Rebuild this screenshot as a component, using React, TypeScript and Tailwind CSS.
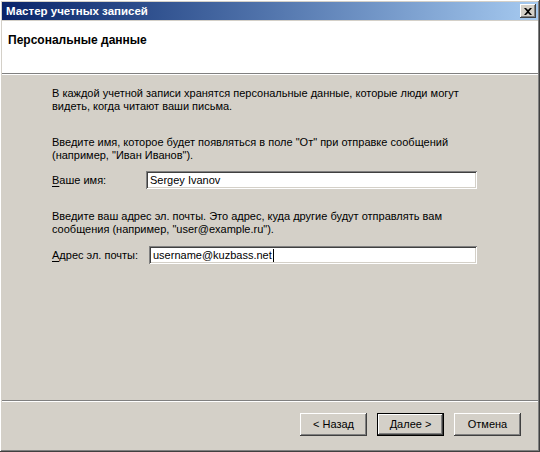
const raised =
  'shadow-[inset_-1px_-1px_#404040,inset_1px_1px_#ffffff,inset_-2px_-2px_#808080,inset_2px_2px_#d4d0c8]';
const sunken =
  'shadow-[inset_1px_1px_#808080,inset_-1px_-1px_#ffffff,inset_2px_2px_#404040,inset_-2px_-2px_#d4d0c8]';

function Field({ label, accel, width, value, caret }: { label: string; accel: string; width: string; value: string; caret?: boolean }) {
  return (
    <div className="flex items-center">
      <label className={`${width} shrink-0`}>
        <span className="underline underline-offset-2">{accel}</span>
        {label}
      </label>
      <div className={`flex h-[18px] flex-1 items-center bg-white pl-[4px] ${sunken}`}>
        <span>{value}</span>
        {caret && <span className="ml-[1px] h-[13px] w-[1px] bg-black" />}
      </div>
    </div>
  );
}

function Button({ children, primary }: { children: React.ReactNode; primary?: boolean }) {
  return (
    <button
      className={`flex h-[23px] w-[67px] items-center justify-center bg-[#d4d0c8] text-black ${
        primary
          ? 'shadow-[inset_0_0_0_1px_#000000,inset_-2px_-2px_#404040,inset_2px_2px_#ffffff,inset_-3px_-3px_#808080]'
          : raised
      }`}
    >
      {children}
    </button>
  );
}

export default function App() {
  return (
    <div
      className={`flex h-[452px] w-[540px] flex-col bg-[#d4d0c8] p-[2px] text-[11px] leading-[13px] text-black ${raised}`}
      style={{ fontFamily: '"Liberation Sans", Arial, sans-serif' }}
    >
      {/* title bar */}
      <div className="flex h-[18px] shrink-0 items-center justify-between bg-gradient-to-r from-[#0a246a] to-[#a6caf0] pl-[4px] pr-[2px]">
        <span className="text-[11.5px] font-bold text-white">Мастер учетных записей</span>
        <div className={`flex h-[14px] w-[16px] items-center justify-center bg-[#d4d0c8] ${raised}`}>
          <svg width="8" height="7" viewBox="0 0 8 7">
            <path d="M0 0h2l2 2 2-2h2L5 3.5 8 7H6L4 5 2 7H0l3-3.5z" fill="#000" />
          </svg>
        </div>
      </div>

      {/* header */}
      <div className="mt-[1px] flex h-[52px] shrink-0 items-start bg-white pl-[6px] pt-[13px]">
        <span className="text-[12px] font-bold">Персональные данные</span>
      </div>
      <div className="h-[1px] shrink-0 bg-[#808080]" />
      <div className="h-[1px] shrink-0 bg-white" />

      {/* body */}
      <div className="flex flex-1 flex-col pl-[50px] pr-[61px] pt-[12px]">
        <p>
          В каждой учетной записи хранятся персональные данные, которые люди могут
          <br />
          видеть, когда читают ваши письма.
        </p>
        <p className="mt-[23px]">
          Введите имя, которое будет появляться в поле "От" при отправке сообщений
          <br />
          (например, "Иван Иванов").
        </p>
        <div className="mt-[9px]">
          <Field label="аше имя:" accel="В" width="w-[94px]" value="Sergey Ivanov" />
        </div>
        <p className="mt-[21px]">
          Введите ваш адрес эл. почты. Это адрес, куда другие будут отправлять вам
          <br />
          сообщения (например, "user@example.ru").
        </p>
        <div className="mt-[10px]">
          <Field label="дрес эл. почты:" accel="А" width="w-[97px]" value="username@kuzbass.net" caret />
        </div>
      </div>

      {/* footer */}
      <div className="h-[1px] shrink-0 bg-[#808080]" />
      <div className="h-[1px] shrink-0 bg-white" />
      <div className="flex h-[48px] shrink-0 items-start justify-end gap-[10px] pr-[17px] pt-[11px]">
        <Button>&lt; Назад</Button>
        <Button primary>Далее &gt;</Button>
        <Button>Отмена</Button>
      </div>
    </div>
  );
}
